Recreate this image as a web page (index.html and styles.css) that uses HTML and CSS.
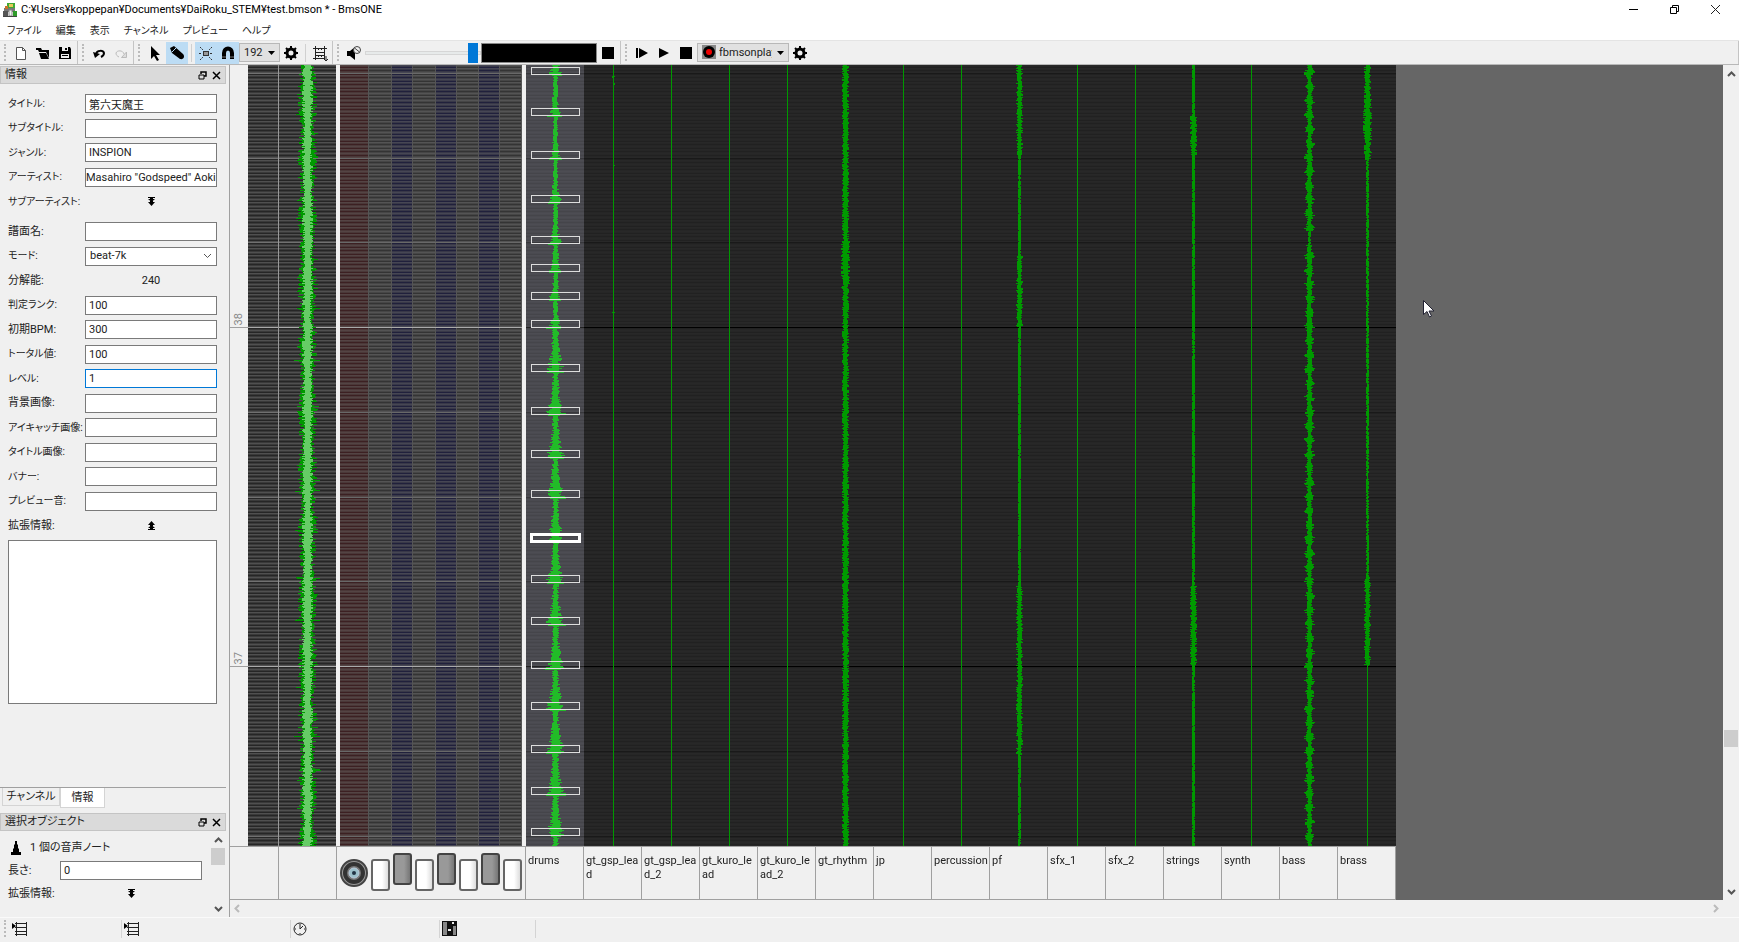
FILE: index.html
```html
<!DOCTYPE html>
<html lang="ja">
<head>
    <meta charset="UTF-8">
    <meta name="viewport" content="width=device-width, initial-scale=1.0">
    <title>BmsONE</title>
    <link rel="stylesheet" href="styles.css">
</head>
<body>

    <header class="titlebar">
        <svg class="app-icon" width="16" height="16" viewBox="0 0 16 16">
            <path d="M5 1h8v5H5z" fill="#3faa35"/>
            <path d="M7 2h4v3H7z" fill="#e8c95a"/>
            <path d="M2 6h11v4H2z" fill="#777"/>
            <path d="M1 9h5v5H1z" fill="#555"/>
            <path d="M7 8h3v6H7z" fill="#f4f4f4" stroke="#888"/>
            <path d="M11 9h4v5h-4z" fill="#2f9b2a"/>
            <path d="M3 4h3v3H3z" fill="#c8702a"/>
            <path d="M1 14h14v1H1z" fill="#444"/>
        </svg>
        <h1>C:¥Users¥koppepan¥Documents¥DaiRoku_STEM¥test.bmson * - BmsONE</h1>
        <div class="window-buttons">
            <button aria-label="Minimize"><svg width="11" height="11" viewBox="0 0 11 11"><path d="M1 5.500h9" stroke="#000"/></svg></button>
            <button aria-label="Restore"><svg width="11" height="11" viewBox="0 0 11 11" fill="none" stroke="#000"><path d="M1.500 3.500h6v6h-6z"/><path d="M3.500 3V1.500h6v6H8"/></svg></button>
            <button aria-label="Close"><svg width="11" height="11" viewBox="0 0 11 11"><path d="M1 1l9 9M10 1l-9 9" stroke="#222"/></svg></button>
        </div>
    </header>

    <nav class="menubar">
        <button>ファイル</button>
        <button>編集</button>
        <button>表示</button>
        <button>チャンネル</button>
        <button>プレビュー</button>
        <button>ヘルプ</button>
    </nav>

    <div class="toolbar">
        <div class="group">
            <i class="handle"></i>
            <button class="tool" aria-label="New"><svg width="16" height="16" viewBox="0 0 16 16"><path d="M3.500 2.500h6l3 3v9h-9z" fill="#fff" stroke="#555"/><path d="M9.500 2.500v3h3" fill="none" stroke="#555"/></svg></button>
            <button class="tool" aria-label="Open"><svg width="16" height="16" viewBox="0 0 16 16"><path d="M1 3h5l1 2h7v8L11 7H4L3 5H1z"/><path d="M4 8h7l3 6H6z"/></svg></button>
            <button class="tool" aria-label="Save"><svg width="16" height="16" viewBox="0 0 16 16"><path d="M2 2h11l1 2v10H2z"/><path d="M5 2h6v4H5zM4 9h8v4H4z" fill="#efefef"/><path d="M8 3h2v2H8zM5 10h6v1H5z"/></svg></button>
        </div>
        <div class="group">
            <i class="handle"></i>
            <button class="tool" aria-label="Undo"><svg width="16" height="16" viewBox="0 0 16 16"><path d="M5 9c1-4 7-4 8-1 0 2-1 3-3 4" fill="none" stroke="#000" stroke-width="2"/><path d="M2 7l7 2-5 4z"/></svg></button>
            <button class="tool" aria-label="Redo"><svg width="16" height="16" viewBox="0 0 16 16"><path d="M11 9c-1-4-7-4-8-1 0 2 1 3 3 4" fill="none" stroke="#bbb"/><path d="M13.500 7v5.500h-5z" fill="#ddd" stroke="#bbb"/></svg></button>
        </div>
        <div class="group">
            <i class="handle"></i>
            <button class="tool" aria-label="Select"><svg width="16" height="16" viewBox="0 0 16 16"><path d="M4 1l9 9H9l3 5-2 1-3-5-3 3z"/></svg></button>
            <button class="tool on" aria-label="Write"><svg width="16" height="16" viewBox="0 0 16 16"><path d="M1 3l4-2 9 8c2 2 1 6-3 5L3 8z"/><path d="M3 7l4-4" stroke="#bcdcf4"/></svg></button>
            <i class="sep"></i>
            <button class="tool on" aria-label="Snap to notes"><svg width="16" height="16" viewBox="0 0 16 16" fill="none" stroke="#333"><rect x="5.500" y="6.500" width="5" height="4" fill="#999"/><path d="M1 8.500h3M12 8.500h3M2 2l3 3M14 2l-3 3M2 15l3-3M14 15l-3-3" stroke-dasharray="2 1"/></svg></button>
            <button class="tool on" aria-label="Snap to grid"><svg width="16" height="16" viewBox="0 0 16 16"><path d="M4 14V8c0-6 8-6 8 0v6" fill="none" stroke="#000" stroke-width="4"/><path d="M2 12h4M10 12h4" stroke="#777"/></svg></button>
            <select class="combo" aria-label="Grid"><option>192</option></select>
            <button class="tool" aria-label="Grid settings"><svg width="14" height="14" viewBox="0 0 14 14"><circle cx="7" cy="7" r="4" fill="none" stroke="#000" stroke-width="3"/><path d="M7 0v3M7 11v3M0 7h3M11 7h3M2 2l2 2M10 10l2 2M12 2l-2 2M4 10l-2 2" stroke="#000" stroke-width="2"/></svg></button>
            <i class="sep"></i>
            <button class="tool" aria-label="Timing"><svg width="16" height="16" viewBox="0 0 16 16" fill="none" stroke="#222"><path d="M3.500 1v14M12.500 1v14M1 3.500h14M4 7.500h8M4 10.500h8M1 13.500h12M6 5l2-2 2 2M6 12l2-2 2 2"/><path d="M14 11v4M12 14l2 2 2-2"/></svg></button>
        </div>
        <div class="group">
            <i class="handle"></i>
            <button class="tool" aria-label="Mute"><svg width="16" height="16" viewBox="0 0 16 16"><path d="M1 6h3l5-4v13l-5-4H1z"/><circle cx="11" cy="5" r="3.500" fill="#efefef" stroke="#444"/><path d="M8.500 3l5 4" stroke="#444"/></svg></button>
            <input class="volume" type="range" min="0" max="100" value="98" aria-label="Volume">
            <div class="meter"></div>
            <button class="tool" aria-label="Stop sound"><svg width="12" height="12"><path d="M0 0h12v12H0z"/></svg></button>
        </div>
        <div class="group last">
            <i class="handle"></i>
            <button class="tool" aria-label="Play from here"><svg width="14" height="12" viewBox="0 0 14 12"><path d="M1 1h2v10H1zM4 1l9 5-9 5z"/></svg></button>
            <button class="tool" aria-label="Play"><svg width="12" height="12" viewBox="0 0 12 12"><path d="M1 1l10 5-10 5z"/></svg></button>
            <button class="tool" aria-label="Stop"><svg width="12" height="12"><path d="M0 0h12v12H0z"/></svg></button>
            <div class="player">
                <svg width="14" height="14" viewBox="0 0 14 14"><path d="M0 0h14v14H0z" fill="#888"/><circle cx="7" cy="7" r="6"/><circle cx="7" cy="7" r="3" fill="#e00"/></svg>
                <select class="combo" aria-label="Player"><option>fbmsonplay</option></select>
            </div>
            <button class="tool" aria-label="Player settings"><svg width="14" height="14" viewBox="0 0 14 14"><circle cx="7" cy="7" r="4" fill="none" stroke="#000" stroke-width="3"/><path d="M7 0v3M7 11v3M0 7h3M11 7h3M2 2l2 2M10 10l2 2M12 2l-2 2M4 10l-2 2" stroke="#000" stroke-width="2"/></svg></button>
        </div>
    </div>

    <main>
        <aside>
            <div class="dock-title">
                <h2>情報</h2>
                <button aria-label="Float"><svg width="9" height="9" viewBox="0 0 9 9" fill="none" stroke="#000"><path d="M3 3V1h5v4H6" stroke-width="1.500"/><path d="M1 4h5v4H1z"/></svg></button>
                <button aria-label="Close"><svg width="9" height="9" viewBox="0 0 9 9"><path d="M1 1l7 7M8 1L1 8" stroke="#000" stroke-width="1.500"/></svg></button>
            </div>
            <form class="info">
                <div class="fields head">
                    <label class="kana" for="title">タイトル:</label><input id="title" value="第六天魔王">
                    <label class="kana" for="subtitle">サブタイトル:</label><input id="subtitle">
                    <label class="kana" for="genre">ジャンル:</label><input id="genre" value="INSPION">
                    <label class="kana" for="artist">アーティスト:</label><input id="artist" class="full" value="Masahiro &quot;Godspeed&quot; Aoki">
                    <span class="kana">サブアーティスト:</span><button type="button" class="expand" aria-label="Expand"><svg width="9" height="9" viewBox="0 0 9 9"><path d="M1 0h7v1H6v1h2L4.500 5 1 2h2V1H1zM3 4h3v1h2L4.500 9 1 5h2z"/></svg></button>
                </div>
                <div class="fields body">
                    <label for="chart">譜面名:</label><input id="chart">
                    <label class="kana" for="mode">モード:</label><select id="mode"><option>beat-7k</option></select>
                    <span>分解能:</span><output>240</output>
                    <label class="kana" for="rank">判定ランク:</label><input id="rank" value="100">
                    <label for="bpm">初期BPM:</label><input id="bpm" value="300">
                    <label class="kana" for="total">トータル値:</label><input id="total" value="100">
                    <label class="kana" for="level">レベル:</label><input id="level" class="focused" value="1">
                    <label for="back">背景画像:</label><input id="back">
                    <label class="kana" for="eye">アイキャッチ画像:</label><input id="eye">
                    <label class="kana" for="timg">タイトル画像:</label><input id="timg">
                    <label class="kana" for="banner">バナー:</label><input id="banner">
                    <label class="kana" for="pre">プレビュー音:</label><input id="pre">
                    <label for="extra">拡張情報:</label><button type="button" class="expand" aria-label="Collapse"><svg width="9" height="9" viewBox="0 0 9 9"><path d="M1 9h7V8H6V7h2L4.500 4 1 7h2v1H1zM3 5h3V4h2L4.500 0 1 4h2z"/></svg></button>
                </div>
                <textarea id="extra"></textarea>
            </form>
            <div class="tabs">
                <button>チャンネル</button>
                <button class="active">情報</button>
            </div>
            <div class="dock-title">
                <h2>選択オブジェクト</h2>
                <button aria-label="Float"><svg width="9" height="9" viewBox="0 0 9 9" fill="none" stroke="#000"><path d="M3 3V1h5v4H6" stroke-width="1.500"/><path d="M1 4h5v4H1z"/></svg></button>
                <button aria-label="Close"><svg width="9" height="9" viewBox="0 0 9 9"><path d="M1 1l7 7M8 1L1 8" stroke="#000" stroke-width="1.500"/></svg></button>
            </div>
            <div class="selection">
                <form>
                    <p><svg width="12" height="14" viewBox="0 0 12 14"><path d="M5 0h2v3l1 1v3l1 1v3h2v3H1v-3h2V8l1-1V4l1-1z"/></svg>1 個の音声ノート</p>
                    <label for="length">長さ:</label><input id="length" value="0">
                    <span>拡張情報:</span><button type="button" class="expand" aria-label="Expand"><svg width="9" height="9" viewBox="0 0 9 9"><path d="M1 0h7v1H6v1h2L4.500 5 1 2h2V1H1zM3 4h3v1h2L4.500 9 1 5h2z"/></svg></button>
                </form>
                <div class="vbar">
                    <button aria-label="Up"><svg width="9" height="6" viewBox="0 0 9 6"><path d="M1 5l3.500-3.500L8 5" fill="none" stroke="#555" stroke-width="2"/></svg></button>
                    <div class="track"><div class="thumb"></div></div>
                    <button aria-label="Down"><svg width="9" height="6" viewBox="0 0 9 6"><path d="M1 1l3.500 3.500L8 1" fill="none" stroke="#555" stroke-width="2"/></svg></button>
                </div>
            </div>
        </aside>

        <section class="editor">
            <div class="score">
                <div class="lanes">
                    <div class="ruler">
                        <div class="bar first"><span>38</span></div>
                        <div class="bar"><span>37</span></div>
                    </div>
                    <canvas class="lane speed" data-kind="plain"></canvas>
                    <canvas class="lane master" data-kind="master"></canvas>
                    <i class="divider"></i>
                    <canvas class="lane keys" data-kind="keys"></canvas>
                    <i class="divider"></i>
                    <canvas class="lane" data-kind="drums"></canvas>
                    <canvas class="lane" data-kind="lead"></canvas>
                    <canvas class="lane" data-kind="silent"></canvas>
                    <canvas class="lane" data-kind="silent"></canvas>
                    <canvas class="lane" data-kind="silent"></canvas>
                    <canvas class="lane" data-kind="rhythm"></canvas>
                    <canvas class="lane" data-kind="silent"></canvas>
                    <canvas class="lane" data-kind="silent"></canvas>
                    <canvas class="lane" data-kind="pf"></canvas>
                    <canvas class="lane" data-kind="silent"></canvas>
                    <canvas class="lane" data-kind="silent"></canvas>
                    <canvas class="lane" data-kind="strings"></canvas>
                    <canvas class="lane" data-kind="silent"></canvas>
                    <canvas class="lane" data-kind="bass"></canvas>
                    <canvas class="lane" data-kind="brass"></canvas>
                </div>
                <div class="names">
                    <div class="blank-a"></div>
                    <div class="blank-b"></div>
                    <div class="keyboard">
                        <svg width="28" height="28" viewBox="0 0 28 28"><circle cx="14" cy="14" r="13" fill="#999" stroke="#444" stroke-width="2"/><circle cx="14" cy="14" r="9" fill="#777" stroke="#333" stroke-width="4"/><circle cx="14" cy="14" r="5" fill="#9cc0ca" stroke="#bcd"/><circle cx="14" cy="14" r="2" fill="#234"/></svg>
                        <i class="key"></i><i class="key black"></i><i class="key"></i><i class="key black"></i><i class="key"></i><i class="key black"></i><i class="key"></i>
                    </div>
                    <div class="name">drums</div>
                    <div class="name">gt_gsp_lead</div>
                    <div class="name">gt_gsp_lead_2</div>
                    <div class="name">gt_kuro_lead</div>
                    <div class="name">gt_kuro_lead_2</div>
                    <div class="name">gt_rhythm</div>
                    <div class="name">jp</div>
                    <div class="name">percussion</div>
                    <div class="name">pf</div>
                    <div class="name">sfx_1</div>
                    <div class="name">sfx_2</div>
                    <div class="name">strings</div>
                    <div class="name">synth</div>
                    <div class="name">bass</div>
                    <div class="name">brass</div>
                </div>
            </div>
            <div class="empty">
                <svg class="pointer" width="12" height="18" viewBox="0 0 12 18"><path d="M.5.500v14l3.500-3 2.500 5.500 2-1-2.500-5h5z" fill="#fff" stroke="#223"/></svg>
            </div>
            <div class="vbar big">
                <button aria-label="Up"><svg width="9" height="6" viewBox="0 0 9 6"><path d="M1 5l3.500-3.500L8 5" fill="none" stroke="#555" stroke-width="2"/></svg></button>
                <div class="track"><div class="thumb"></div></div>
                <button aria-label="Down"><svg width="9" height="6" viewBox="0 0 9 6"><path d="M1 1l3.500 3.500L8 1" fill="none" stroke="#555" stroke-width="2"/></svg></button>
            </div>
            <div class="hbar">
                <button aria-label="Left"><svg width="6" height="9" viewBox="0 0 6 9"><path d="M5 1L1.500 4.500 5 8" fill="none" stroke="#bbb" stroke-width="2"/></svg></button>
                <button aria-label="Right"><svg width="6" height="9" viewBox="0 0 6 9"><path d="M1 1l3.500 3.500L1 8" fill="none" stroke="#bbb" stroke-width="2"/></svg></button>
            </div>
        </section>
    </main>

    <footer class="statusbar">
        <i class="handle"></i>
        <div class="status beat"><svg width="16" height="16" viewBox="0 0 16 16" fill="none" stroke="#222"><path d="M4.500 1v14M14.500 1v14M3 2.500h12M3 6.500h12M3 10.500h12M3 13.500h12"/><path d="M0 2l4 3-4 3z" fill="#000" stroke="none"/></svg></div>
        <div class="status tick"><svg width="16" height="16" viewBox="0 0 16 16" fill="none" stroke="#222"><path d="M4.500 1v14M14.500 1v14M3 2.500h12M3 6.500h12M3 10.500h12M3 13.500h12"/><path d="M0 2l4 3-4 3z" fill="#000" stroke="none"/></svg></div>
        <div class="status time"><svg width="14" height="14" viewBox="0 0 14 14" fill="none" stroke="#222"><circle cx="7" cy="7" r="6"/><path d="M7 2v5l3-3M7 11v1M2 7h1M11 7h1"/></svg></div>
        <div class="status channel"><svg width="16" height="15" viewBox="0 0 16 15"><path d="M0 0h15v15H0z" fill="#111"/><path d="M1 1h4v13H1zM11 5h3v9h-3z" fill="#888"/><path d="M6 8h3v2H6zM10 1h2v2h-2z" fill="#eee"/></svg></div>
    </footer>

    <script src="script.js"></script>
</body>
</html>
```
FILE: styles.css
```css
* {
    box-sizing: border-box;
}

body {
    margin: 0;
    height: 100vh;
    display: flex;
    flex-direction: column;
    background: #f0f0f0;
    color: #222;
    font-family: Roboto, "Noto Sans CJK JP", sans-serif;
    font-size: 11px;
    line-height: 14px;
    font-feature-settings: "palt";
    overflow: hidden;
}

button, input, select, textarea {
    font: inherit;
    font-feature-settings: inherit;
    color: inherit;
    margin: 0;
    padding: 0;
    border: none;
    border-radius: 0;
    background: none;
    outline: none;
}

svg {
    display: block;
}

.titlebar {
    height: 21px;
    display: flex;
    align-items: center;
    background: #fff;
    padding: 0 3px 2px 2px;
}

.titlebar h1 {
    flex: 1;
    margin: 0 0 0 3px;
    font-size: 11px;
    font-weight: normal;
    color: #000;
}

.window-buttons button {
    width: 41px;
    height: 18px;
}

.window-buttons {
    display: flex;
}

.window-buttons svg {
    margin: auto;
}

.menubar {
    height: 19px;
    display: flex;
    gap: 14px;
    align-items: center;
    padding-left: 7px;
    font-size: 10px;
    background: #fff;
}

.toolbar {
    height: 25px;
    display: flex;
    border-top: 1px solid #e4e4e4;
    border-bottom: 1px solid #b8b8b8;
}

.group {
    display: flex;
    align-items: center;
    padding: 0 1px 0 4px;
    border-right: 1px solid #c4c4c4;
}

.group.last {
    flex: 1;
}

.handle {
    width: 3px;
    height: 17px;
    margin-right: 3px;
    border-left: 2px dotted #bbb;
}

.tool {
    width: 22px;
    height: 22px;
    display: grid;
    place-items: center;
}

.tool.on {
    background: #bcdcf4;
}

.sep {
    width: 1px;
    height: 18px;
    margin: 0 3px;
    background: #d0d0d0;
}

.combo {
    appearance: none;
    width: 41px;
    height: 19px;
    padding-left: 4px;
    border: 1px solid #b8b8b8;
    background: #e1e1e1 url("data:image/svg+xml,%3Csvg xmlns='http://www.w3.org/2000/svg' width='7' height='4'%3E%3Cpath d='M0 0h7L3.500 4z'/%3E%3C/svg%3E") no-repeat right 4px center;
}

.player {
    position: relative;
}

.player .combo {
    width: 92px;
    padding: 0 16px 0 21px;
}

.player svg {
    position: absolute;
    left: 5px;
    top: 2px;
}

.volume {
    appearance: none;
    width: 116px;
    height: 20px;
}

.volume::-webkit-slider-runnable-track {
    height: 4px;
    border: 1px solid #d6d6d6;
    background: #e7eaea;
}

.volume::-webkit-slider-thumb {
    appearance: none;
    width: 10px;
    height: 20px;
    margin-top: -9px;
    background: #0078d7;
}

.meter {
    width: 116px;
    height: 20px;
    border: 1px solid #888;
    background: #000;
}

main {
    flex: 1;
    min-height: 0;
    display: flex;
}

aside {
    width: 229px;
    padding: 1px 3px 0 0;
    display: flex;
    flex-direction: column;
}

.dock-title {
    height: 18px;
    display: flex;
    align-items: center;
    gap: 5px;
    padding: 0 4px;
    border: 1px solid #c4c4c4;
    background: #dadada;
}

.dock-title h2 {
    flex: 1;
    margin: 0;
    font-size: 11px;
    font-weight: normal;
}

.info {
    flex: 1;
    padding: 10px 9px 0 8px;
}

.fields {
    display: grid;
    grid-template-columns: 77px 1fr;
    grid-auto-rows: 19px;
    align-content: space-between;
    align-items: center;
    white-space: nowrap;
}

.fields.head {
    height: 117px;
}

.fields.body {
    height: 313px;
    margin-top: 11px;
}

.kana {
    font-size: 10px;
}

.fields output {
    text-align: center;
}

.info input, .info select, .info textarea, .selection input {
    width: 100%;
    height: 19px;
    padding: 0 3px;
    border: 1px solid #7a7a7a;
    background: #fff;
}

.info input.full {
    padding: 0;
}

.info input.focused {
    border-color: #0078d7;
}

.info select {
    appearance: none;
    padding-left: 4px;
    background: #fff url("data:image/svg+xml,%3Csvg xmlns='http://www.w3.org/2000/svg' width='9' height='6'%3E%3Cpath d='M1 1l3.500 3.500L8 1' fill='none' stroke='%23555'/%3E%3C/svg%3E") no-repeat right 4px center;
}

.info textarea {
    display: block;
    height: 164px;
    margin-top: 5px;
    resize: none;
}

.expand {
    display: grid;
    place-items: center;
}

.tabs {
    display: flex;
    align-items: flex-start;
    height: 26px;
    padding-left: 2px;
    border-top: 1px solid #a0a0a0;
}

.tabs button {
    height: 18px;
    width: 58px;
    border: 1px solid #d4d4d4;
    border-top: none;
}

.tabs .active {
    width: 45px;
    height: 20px;
    background: #fff;
}

.selection {
    height: 86px;
    display: flex;
}

.selection form {
    flex: 1;
    display: grid;
    grid-template-columns: 52px 142px;
    grid-template-rows: 19px 19px 19px;
    align-content: start;
    align-items: center;
    gap: 4px 0;
    padding: 7px 0 0 8px;
}

.selection p {
    grid-column: 1 / 3;
    display: flex;
    gap: 8px;
    margin: 0;
    padding-left: 2px;
}

.vbar {
    width: 16px;
    display: flex;
    flex-direction: column;
}

.vbar button {
    height: 17px;
    display: grid;
    place-items: center;
}

.vbar .track {
    flex: 1;
}

.vbar .thumb {
    width: 14px;
    height: 17px;
    margin: 0 auto;
    background: #cdcdcd;
}

.editor {
    flex: 1;
    min-width: 0;
    display: grid;
    grid-template-columns: auto 1fr 16px;
    grid-template-rows: minmax(0, 1fr) 17px;
    border-left: 1px solid #a0a0a0;
}

.score {
    display: flex;
    flex-direction: column;
    min-height: 0;
}

.lanes {
    flex: 1;
    min-height: 0;
    display: flex;
    overflow: hidden;
}

.ruler {
    width: 18px;
}

.bar {
    height: 339px;
    display: flex;
    align-items: flex-end;
    justify-content: center;
    padding-bottom: 2px;
    border-bottom: 1px solid #a0a0a0;
    color: #888;
}

.bar.first {
    height: 263px;
}

.bar span {
    writing-mode: vertical-rl;
    rotate: 180deg;
}

.lane {
    width: 58px;
}

.speed {
    width: 31px;
}

.master {
    width: 57px;
}

.keys {
    width: 182px;
}

.divider {
    width: 4px;
    background: #f0f0f0;
}

.names {
    height: 54px;
    display: flex;
    border-top: 1px solid #a0a0a0;
    border-bottom: 1px solid #a0a0a0;
}

.names div {
    border-right: 1px solid #a0a0a0;
}

.blank-a {
    width: 49px;
}

.blank-b {
    width: 58px;
}

.keyboard {
    width: 189px;
    display: flex;
    gap: 3px;
    padding: 12px 0 0 3px;
}

.key {
    width: 19px;
    height: 32px;
    border: 2px solid #666;
    border-radius: 3px;
    background: linear-gradient(to right, #fff 60%, #ddd);
}

.key.black {
    margin-top: -6px;
    border-color: #444;
    background: linear-gradient(to right, #999 60%, #777);
}

.name {
    width: 58px;
    padding: 7px 0 0 2px;
    word-break: break-all;
}

.empty {
    position: relative;
    background: #666;
}

.pointer {
    position: absolute;
    left: 27px;
    top: 235px;
}

.vbar.big .track {
    display: flex;
    flex-direction: column;
    justify-content: flex-end;
    padding-bottom: 136px;
}

.hbar {
    grid-column: 1 / 3;
    display: flex;
    justify-content: space-between;
    padding: 0 4px;
}

.statusbar {
    height: 25px;
    display: flex;
    align-items: center;
    padding: 0 0 3px 4px;
    border-top: 1px solid #fafafa;
}

.status {
    height: 18px;
    display: flex;
    align-items: center;
    padding-left: 2px;
    border-right: 1px solid #d4d4d4;
}

.beat {
    width: 112px;
}

.tick {
    width: 169px;
}

.time {
    width: 149px;
}

.channel {
    width: 96px;
}
```
FILE: script.js
```js
const MEASURE = 339;
const BAR = 262;
const NOTES = [6, 47, 90, 134, 175, 203, 231, 259, 303, 346, 389, 429, 473, 514, 556, 600, 641, 684, 726, 767];
const SELECTED = 473;

let seed = 7;
function rnd() {
    seed = (seed * 16807) % 2147483647;
    return seed / 2147483647;
}

function grid(ctx, x, w, h, base, dark, light) {
    ctx.fillStyle = base;
    ctx.fillRect(x, 0, w, h);
    const step = MEASURE / 96;
    for (let i = -80; i < 160; i++) {
        const y = Math.round(BAR + i * step);
        ctx.fillStyle = dark;
        ctx.fillRect(x, y + 1, w, 1);
        ctx.fillStyle = light;
        ctx.fillRect(x, y - 1, w, 1);
    }
}

function beats(ctx, w, h, beat, bar) {
    for (let i = -4; i < 8; i++) {
        const y = Math.round(BAR + i * MEASURE / 4);
        ctx.fillStyle = i % 4 === 0 ? bar : beat;
        ctx.fillRect(0, y, w, 1);
    }
}

function wave(ctx, cx, h, color, amp) {
    ctx.fillStyle = color;
    for (let y = 0; y < h; y++) {
        const a = amp(y);
        const l = Math.round(a * (0.35 + rnd() * 0.75));
        const r = Math.round(a * (0.35 + rnd() * 0.75));
        ctx.fillRect(cx - l, y, l + r + 1, 1);
    }
}

// distance up from the nearest note below
function decay(y) {
    const next = NOTES.find(n => n + 4 >= y);
    return next === undefined ? 40 : next + 4 - y;
}

const AMPS = {
    lead: y => (y > 10 && y < 14) || (y > 17 && y < 20) || y === 100 || y === 247 ? 1 : 0,
    silent: () => 0,
    rhythm: y => y > 175 && y < 225 ? 4 : 3,
    pf: y => (y < 90 || (y > 190 && y < 262) || (y > 520 && y < 690)) ? 2.6 : 1.2,
    strings: y => (y > 50 && y < 90) || (y > 520 && y < 600) ? 3 : 1.2,
    bass: y => y > 165 && y < 180 ? 1 : 2 + 3 * Math.pow(Math.abs(Math.sin(y / 4.5)), 3),
    brass: y => y < 95 ? 4 - Math.abs(y - 60) / 40 : y > 510 && y < 600 ? 2.6 : y > 600 ? 0 : 0.9
};

document.querySelectorAll("canvas").forEach(c => {
    const w = c.width = c.clientWidth;
    const h = c.height = c.clientHeight;
    const ctx = c.getContext("2d");
    const kind = c.dataset.kind;

    if (kind === "plain" || kind === "master") {
        grid(ctx, 0, w, h, "#3a3a3a", "#262626", "#505050");
        beats(ctx, w, h, "#707070", "#aaa");
        ctx.fillStyle = "#999";
        if (kind === "plain") {
            ctx.fillRect(w - 1, 0, 1, h);
        } else {
            wave(ctx, 28, h, "#009900", y => 6 + 3 * Math.abs(Math.sin(y / 20)) + (rnd() > 0.95 ? 4 : 0));
            wave(ctx, 28, h, "#66cc66", y => 4 + Math.abs(Math.sin(y / 20)));
        }
    } else if (kind === "keys") {
        const edges = [0, 29, 52, 73, 96, 117, 139, 160, 182];
        for (let i = 0; i < 8; i++) {
            const x = edges[i];
            const kw = edges[i + 1] - x;
            if (i === 0) grid(ctx, x, kw, h, "#4a3838", "#3c2022", "#544444");
            else if (i % 2 === 0) grid(ctx, x, kw, h, "#383848", "#20203c", "#464654");
            else grid(ctx, x, kw, h, "#464646", "#343434", "#545454");
            ctx.fillStyle = "#555";
            ctx.fillRect(x + kw - 1, 0, 1, h);
        }
        beats(ctx, w, h, "#686868", "#aaa");
    } else if (kind === "drums") {
        grid(ctx, 0, w, h, "#4a4a50", "#45454a", "#4d4d53");
        beats(ctx, w, h, "#38383c", "#222");
        wave(ctx, 29, h, "#22bb28", y => y < 265 ? 2 + 6 * Math.exp(-decay(y) / 7) : 2 + 8 * Math.exp(-decay(y) / 16));
        NOTES.forEach(n => {
            const on = n === SELECTED;
            ctx.strokeStyle = on ? "#fff" : "#ddd";
            ctx.lineWidth = on ? 3 : 1;
            ctx.strokeRect(5.5, n - 3.5, 48, 7);
        });
    } else {
        grid(ctx, 0, w, h, "#262626", "#212121", "#282828");
        beats(ctx, w, h, "#191919", "#000");
        wave(ctx, 29, h, "#009900", AMPS[kind]);
    }
});
```
